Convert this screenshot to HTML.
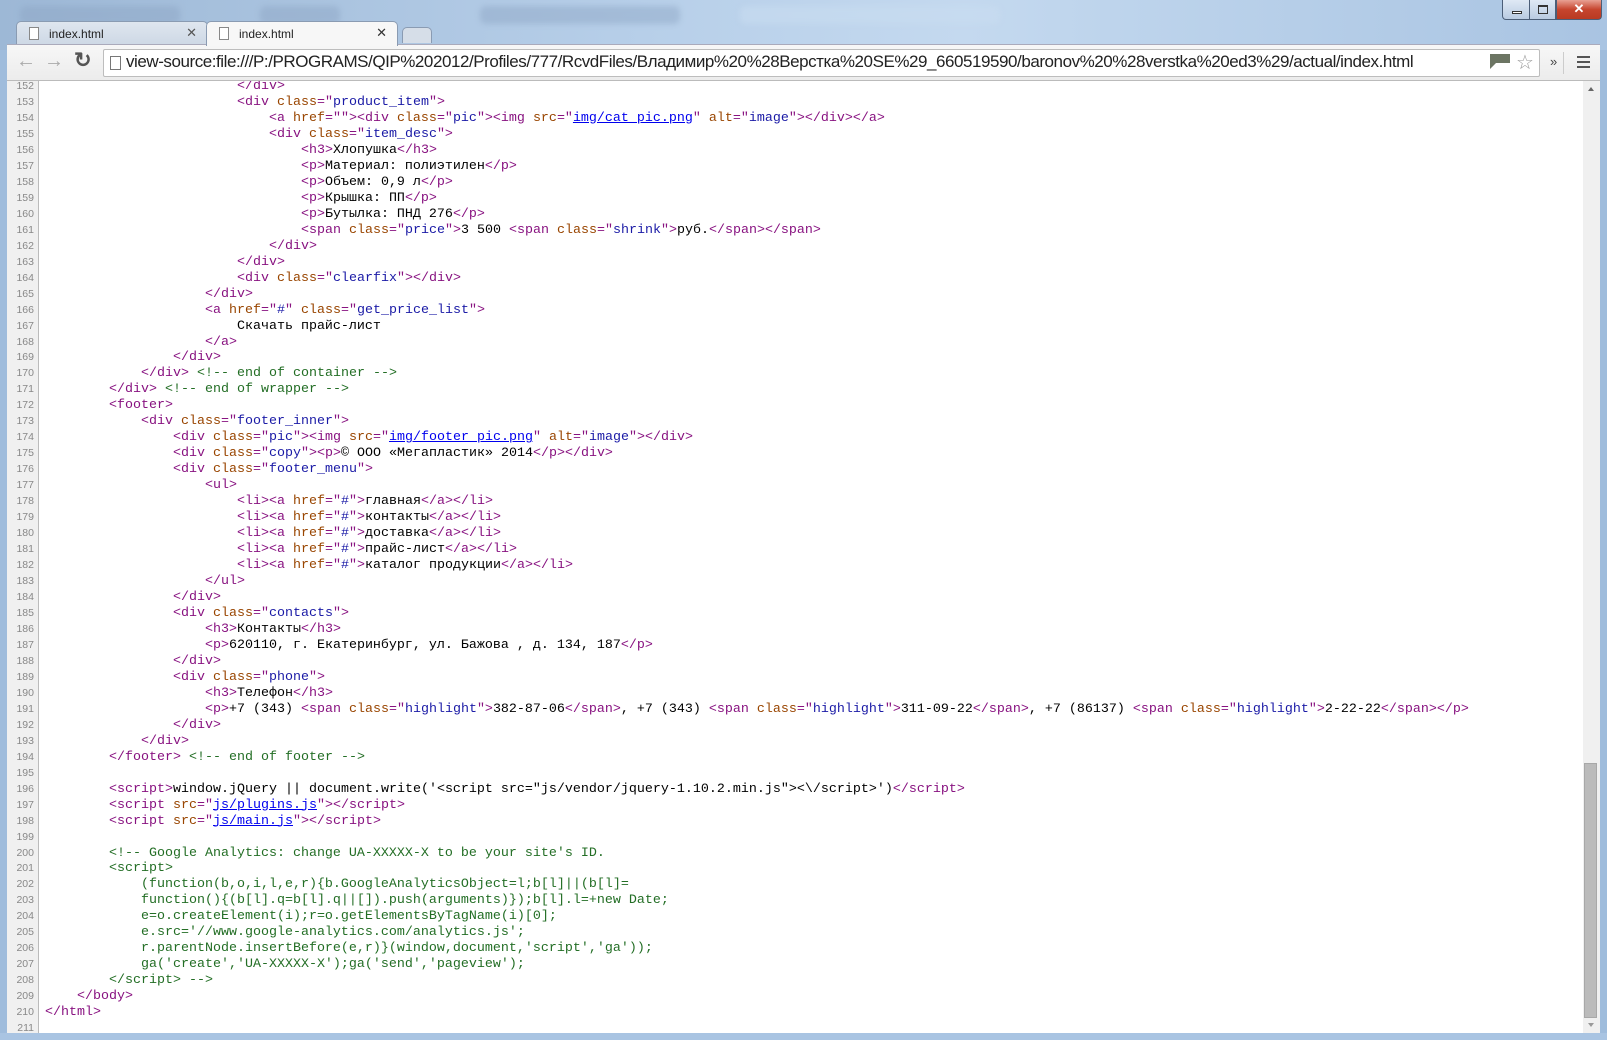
<!DOCTYPE html>
<html><head><meta charset="utf-8"><style>
*{margin:0;padding:0;box-sizing:border-box}
body{width:1607px;height:1040px;overflow:hidden;background:#9fbcdc;position:relative;font-family:"Liberation Sans",sans-serif}
.title{position:absolute;left:0;top:0;width:1607px;height:50px;background:linear-gradient(90deg,#9db8d6,#b7cfe9 40%,#c4d9ef 60%,#a9c4e2);}
.blur{position:absolute;top:6px;height:18px;border-radius:6px;background:rgba(140,165,195,.45);filter:blur(3px)}
.wbtn{position:absolute;top:0;height:20px;border:1px solid #4b5e78;border-top:none;}
.tab{position:absolute;top:21px;height:24px;border:1px solid #8a9bb2;border-bottom:none;border-radius:5px 5px 0 0;font-size:12px;color:#222;padding:5px 0 0 32px}
.tab .x{position:absolute;right:10px;top:3px;font-size:13px;color:#555}
.tab .ic{position:absolute;left:12px;top:5px;width:10px;height:13px;border:1px solid #888;background:#fff}
.toolbar{position:absolute;left:7px;top:44px;width:1593px;height:36px;background:linear-gradient(#f7f7f7,#ececec);border-top:1px solid #aab}
.omni{position:absolute;left:103px;top:49px;width:1437px;height:28px;background:#fff;border:1px solid #bdbdbd;border-radius:2px}
.url{position:absolute;left:126px;top:52px;font-size:17px;color:#222;letter-spacing:-0.45px;white-space:nowrap}
.content{position:absolute;left:7px;top:80px;width:1593px;height:953px;background:#fff;overflow:hidden;border-top:1px solid #bbb}
.gut{position:absolute;left:0;top:0;width:32px;height:953px;background:#f0f0f0;border-right:1px solid #bbb}
.lines{position:absolute;left:0;top:-2px}
.r{height:15.97px;line-height:15.97px;white-space:pre;position:relative}
.n{position:absolute;left:0;width:27px;text-align:right;font-size:10.5px;color:#888;font-family:"Liberation Sans",sans-serif}
.c{position:absolute;left:38px;font-family:"Liberation Mono",monospace;font-size:13.33px;color:#000}
.t{color:#881280}.a{color:#994500}.v{color:#1a1aa6}.m{color:#236e25}.l{color:#0000ee;text-decoration:underline}
.sb{position:absolute;left:1576px;top:0;width:17px;height:953px;background:#f0f0f0}
.thumb{position:absolute;left:1px;top:682px;width:13px;height:255px;background:#bbb;border:1px solid #a8a8a8}
.bottom{position:absolute;left:0;top:1033px;width:1607px;height:7px;background:#a9c4e2}
</style></head><body>
<div class="title">
<div class="blur" style="left:20px;width:160px"></div>
<div class="blur" style="left:260px;width:80px"></div>
<div class="blur" style="left:480px;width:200px"></div>
<div class="blur" style="left:740px;width:260px;background:rgba(200,220,240,.6)"></div>
</div>
<div class="wbtn" style="left:1502px;width:28px;background:linear-gradient(#dfe9f5,#b9cbe2);border-radius:0 0 0 4px"><div style="position:absolute;left:9px;top:11px;width:10px;height:3px;border:1px solid #333;background:#fff"></div></div>
<div class="wbtn" style="left:1529px;width:27px;background:linear-gradient(#dfe9f5,#b9cbe2)"><div style="position:absolute;left:8px;top:5px;width:10px;height:9px;border:1px solid #333;border-top-width:2px"></div></div>
<div class="wbtn" style="left:1556px;width:46px;background:linear-gradient(#e8a193,#c6452e 50%,#b93a22);border-radius:0 0 4px 0;color:#fff;text-align:center;font-weight:bold;font-size:13px;line-height:18px">✕</div>
<div class="tab" style="left:16px;width:192px;background:linear-gradient(#dfe6ef,#cdd8e5)"><span class="ic"></span>index.html<span class="x">✕</span></div>
<div class="tab" style="left:206px;width:192px;background:#f7f7f7;z-index:2;height:25px">
<span class="ic"></span>index.html<span class="x" style="color:#333">✕</span></div>
<div class="tab" style="left:402px;width:30px;height:16px;top:27px;background:#d6dee8;padding:0"></div>
<div class="toolbar"></div>
<div style="position:absolute;left:16px;top:50px;font-size:20px;color:#aaa">←</div>
<div style="position:absolute;left:44px;top:50px;font-size:20px;color:#aaa">→</div>
<div style="position:absolute;left:74px;top:48px;font-size:21px;color:#555;font-weight:bold">↻</div>
<div class="omni"></div>
<div style="position:absolute;left:110px;top:56px;width:11px;height:14px;border:1px solid #777;background:#fff"></div>
<div class="url">view-source:file:///P:/PROGRAMS/QIP%202012/Profiles/777/RcvdFiles/Владимир%20%28Верстка%20SE%29_660519590/baronov%20%28verstka%20ed3%29/actual/index.html</div>
<div style="position:absolute;left:1490px;top:54px;width:20px;height:15px;background:#6c7563;clip-path:polygon(0 0,100% 0,100% 60%,30% 60%,0 100%)"></div>
<div style="position:absolute;left:1516px;top:50px;font-size:20px;color:#999">☆</div>
<div style="position:absolute;left:1550px;top:54px;font-size:13px;color:#444">»</div>
<div style="position:absolute;left:1563px;top:52px;width:1px;height:22px;background:#ccc"></div>
<div style="position:absolute;left:1577px;top:56px;width:13px;height:12px;border-top:2px solid #555;border-bottom:2px solid #555"><div style="margin-top:3px;height:2px;background:#555"></div></div>
<div class="content">
<div class="gut"></div>
<div class="lines">
<div class="r"><span class="n">152</span><span class="c">                        <span class="t">&lt;/div&gt;</span></span></div>
<div class="r"><span class="n">153</span><span class="c">                        <span class="t">&lt;div <span class="a">class</span>="<span class="v">product_item</span>"&gt;</span></span></div>
<div class="r"><span class="n">154</span><span class="c">                            <span class="t">&lt;a <span class="a">href</span>=""&gt;&lt;div <span class="a">class</span>="<span class="v">pic</span>"&gt;&lt;img <span class="a">src</span>="<span class="l">img/cat_pic.png</span>" <span class="a">alt</span>="<span class="v">image</span>"&gt;&lt;/div&gt;&lt;/a&gt;</span></span></div>
<div class="r"><span class="n">155</span><span class="c">                            <span class="t">&lt;div <span class="a">class</span>="<span class="v">item_desc</span>"&gt;</span></span></div>
<div class="r"><span class="n">156</span><span class="c">                                <span class="t">&lt;h3&gt;</span>Хлопушка<span class="t">&lt;/h3&gt;</span></span></div>
<div class="r"><span class="n">157</span><span class="c">                                <span class="t">&lt;p&gt;</span>Материал: полиэтилен<span class="t">&lt;/p&gt;</span></span></div>
<div class="r"><span class="n">158</span><span class="c">                                <span class="t">&lt;p&gt;</span>Объем: 0,9 л<span class="t">&lt;/p&gt;</span></span></div>
<div class="r"><span class="n">159</span><span class="c">                                <span class="t">&lt;p&gt;</span>Крышка: ПП<span class="t">&lt;/p&gt;</span></span></div>
<div class="r"><span class="n">160</span><span class="c">                                <span class="t">&lt;p&gt;</span>Бутылка: ПНД 276<span class="t">&lt;/p&gt;</span></span></div>
<div class="r"><span class="n">161</span><span class="c">                                <span class="t">&lt;span <span class="a">class</span>="<span class="v">price</span>"&gt;</span>3 500 <span class="t">&lt;span <span class="a">class</span>="<span class="v">shrink</span>"&gt;</span>руб.<span class="t">&lt;/span&gt;&lt;/span&gt;</span></span></div>
<div class="r"><span class="n">162</span><span class="c">                            <span class="t">&lt;/div&gt;</span></span></div>
<div class="r"><span class="n">163</span><span class="c">                        <span class="t">&lt;/div&gt;</span></span></div>
<div class="r"><span class="n">164</span><span class="c">                        <span class="t">&lt;div <span class="a">class</span>="<span class="v">clearfix</span>"&gt;&lt;/div&gt;</span></span></div>
<div class="r"><span class="n">165</span><span class="c">                    <span class="t">&lt;/div&gt;</span></span></div>
<div class="r"><span class="n">166</span><span class="c">                    <span class="t">&lt;a <span class="a">href</span>="<span class="v">#</span>" <span class="a">class</span>="<span class="v">get_price_list</span>"&gt;</span></span></div>
<div class="r"><span class="n">167</span><span class="c">                        Скачать прайс-лист</span></div>
<div class="r"><span class="n">168</span><span class="c">                    <span class="t">&lt;/a&gt;</span></span></div>
<div class="r"><span class="n">169</span><span class="c">                <span class="t">&lt;/div&gt;</span></span></div>
<div class="r"><span class="n">170</span><span class="c">            <span class="t">&lt;/div&gt;</span> <span class="m">&lt;!-- end of container --&gt;</span></span></div>
<div class="r"><span class="n">171</span><span class="c">        <span class="t">&lt;/div&gt;</span> <span class="m">&lt;!-- end of wrapper --&gt;</span></span></div>
<div class="r"><span class="n">172</span><span class="c">        <span class="t">&lt;footer&gt;</span></span></div>
<div class="r"><span class="n">173</span><span class="c">            <span class="t">&lt;div <span class="a">class</span>="<span class="v">footer_inner</span>"&gt;</span></span></div>
<div class="r"><span class="n">174</span><span class="c">                <span class="t">&lt;div <span class="a">class</span>="<span class="v">pic</span>"&gt;&lt;img <span class="a">src</span>="<span class="l">img/footer_pic.png</span>" <span class="a">alt</span>="<span class="v">image</span>"&gt;&lt;/div&gt;</span></span></div>
<div class="r"><span class="n">175</span><span class="c">                <span class="t">&lt;div <span class="a">class</span>="<span class="v">copy</span>"&gt;&lt;p&gt;</span>© ООО «Мегапластик» 2014<span class="t">&lt;/p&gt;&lt;/div&gt;</span></span></div>
<div class="r"><span class="n">176</span><span class="c">                <span class="t">&lt;div <span class="a">class</span>="<span class="v">footer_menu</span>"&gt;</span></span></div>
<div class="r"><span class="n">177</span><span class="c">                    <span class="t">&lt;ul&gt;</span></span></div>
<div class="r"><span class="n">178</span><span class="c">                        <span class="t">&lt;li&gt;&lt;a <span class="a">href</span>="<span class="v">#</span>"&gt;</span>главная<span class="t">&lt;/a&gt;&lt;/li&gt;</span></span></div>
<div class="r"><span class="n">179</span><span class="c">                        <span class="t">&lt;li&gt;&lt;a <span class="a">href</span>="<span class="v">#</span>"&gt;</span>контакты<span class="t">&lt;/a&gt;&lt;/li&gt;</span></span></div>
<div class="r"><span class="n">180</span><span class="c">                        <span class="t">&lt;li&gt;&lt;a <span class="a">href</span>="<span class="v">#</span>"&gt;</span>доставка<span class="t">&lt;/a&gt;&lt;/li&gt;</span></span></div>
<div class="r"><span class="n">181</span><span class="c">                        <span class="t">&lt;li&gt;&lt;a <span class="a">href</span>="<span class="v">#</span>"&gt;</span>прайс-лист<span class="t">&lt;/a&gt;&lt;/li&gt;</span></span></div>
<div class="r"><span class="n">182</span><span class="c">                        <span class="t">&lt;li&gt;&lt;a <span class="a">href</span>="<span class="v">#</span>"&gt;</span>каталог продукции<span class="t">&lt;/a&gt;&lt;/li&gt;</span></span></div>
<div class="r"><span class="n">183</span><span class="c">                    <span class="t">&lt;/ul&gt;</span></span></div>
<div class="r"><span class="n">184</span><span class="c">                <span class="t">&lt;/div&gt;</span></span></div>
<div class="r"><span class="n">185</span><span class="c">                <span class="t">&lt;div <span class="a">class</span>="<span class="v">contacts</span>"&gt;</span></span></div>
<div class="r"><span class="n">186</span><span class="c">                    <span class="t">&lt;h3&gt;</span>Контакты<span class="t">&lt;/h3&gt;</span></span></div>
<div class="r"><span class="n">187</span><span class="c">                    <span class="t">&lt;p&gt;</span>620110, г. Екатеринбург, ул. Бажова , д. 134, 187<span class="t">&lt;/p&gt;</span></span></div>
<div class="r"><span class="n">188</span><span class="c">                <span class="t">&lt;/div&gt;</span></span></div>
<div class="r"><span class="n">189</span><span class="c">                <span class="t">&lt;div <span class="a">class</span>="<span class="v">phone</span>"&gt;</span></span></div>
<div class="r"><span class="n">190</span><span class="c">                    <span class="t">&lt;h3&gt;</span>Телефон<span class="t">&lt;/h3&gt;</span></span></div>
<div class="r"><span class="n">191</span><span class="c">                    <span class="t">&lt;p&gt;</span>+7 (343) <span class="t">&lt;span <span class="a">class</span>="<span class="v">highlight</span>"&gt;</span>382-87-06<span class="t">&lt;/span&gt;</span>, +7 (343) <span class="t">&lt;span <span class="a">class</span>="<span class="v">highlight</span>"&gt;</span>311-09-22<span class="t">&lt;/span&gt;</span>, +7 (86137) <span class="t">&lt;span <span class="a">class</span>="<span class="v">highlight</span>"&gt;</span>2-22-22<span class="t">&lt;/span&gt;&lt;/p&gt;</span></span></div>
<div class="r"><span class="n">192</span><span class="c">                <span class="t">&lt;/div&gt;</span></span></div>
<div class="r"><span class="n">193</span><span class="c">            <span class="t">&lt;/div&gt;</span></span></div>
<div class="r"><span class="n">194</span><span class="c">        <span class="t">&lt;/footer&gt;</span> <span class="m">&lt;!-- end of footer --&gt;</span></span></div>
<div class="r"><span class="n">195</span><span class="c"></span></div>
<div class="r"><span class="n">196</span><span class="c">        <span class="t">&lt;script&gt;</span>window.jQuery || document.write('&lt;script src="js/vendor/jquery-1.10.2.min.js"&gt;&lt;\/script&gt;')<span class="t">&lt;/script&gt;</span></span></div>
<div class="r"><span class="n">197</span><span class="c">        <span class="t">&lt;script <span class="a">src</span>="<span class="l">js/plugins.js</span>"&gt;&lt;/script&gt;</span></span></div>
<div class="r"><span class="n">198</span><span class="c">        <span class="t">&lt;script <span class="a">src</span>="<span class="l">js/main.js</span>"&gt;&lt;/script&gt;</span></span></div>
<div class="r"><span class="n">199</span><span class="c"></span></div>
<div class="r"><span class="n">200</span><span class="c m">        &lt;!-- Google Analytics: change UA-XXXXX-X to be your site's ID.</span></div>
<div class="r"><span class="n">201</span><span class="c m">        &lt;script&gt;</span></div>
<div class="r"><span class="n">202</span><span class="c m">            (function(b,o,i,l,e,r){b.GoogleAnalyticsObject=l;b[l]||(b[l]=</span></div>
<div class="r"><span class="n">203</span><span class="c m">            function(){(b[l].q=b[l].q||[]).push(arguments)});b[l].l=+new Date;</span></div>
<div class="r"><span class="n">204</span><span class="c m">            e=o.createElement(i);r=o.getElementsByTagName(i)[0];</span></div>
<div class="r"><span class="n">205</span><span class="c m">            e.src='//www.google-analytics.com/analytics.js';</span></div>
<div class="r"><span class="n">206</span><span class="c m">            r.parentNode.insertBefore(e,r)}(window,document,'script','ga'));</span></div>
<div class="r"><span class="n">207</span><span class="c m">            ga('create','UA-XXXXX-X');ga('send','pageview');</span></div>
<div class="r"><span class="n">208</span><span class="c m">        &lt;/script&gt; --&gt;</span></div>
<div class="r"><span class="n">209</span><span class="c">    <span class="t">&lt;/body&gt;</span></span></div>
<div class="r"><span class="n">210</span><span class="c"><span class="t">&lt;/html&gt;</span></span></div>
<div class="r"><span class="n">211</span><span class="c"></span></div>
</div>
<div class="sb"><div style="position:absolute;left:5px;top:6px;border:3px solid transparent;border-bottom:4px solid #666;border-top:none"></div><div class="thumb"></div><div style="position:absolute;left:5px;top:942px;border:3px solid transparent;border-top:4px solid #999;border-bottom:none"></div></div>
</div>
<div class="bottom"></div>
</body></html>
